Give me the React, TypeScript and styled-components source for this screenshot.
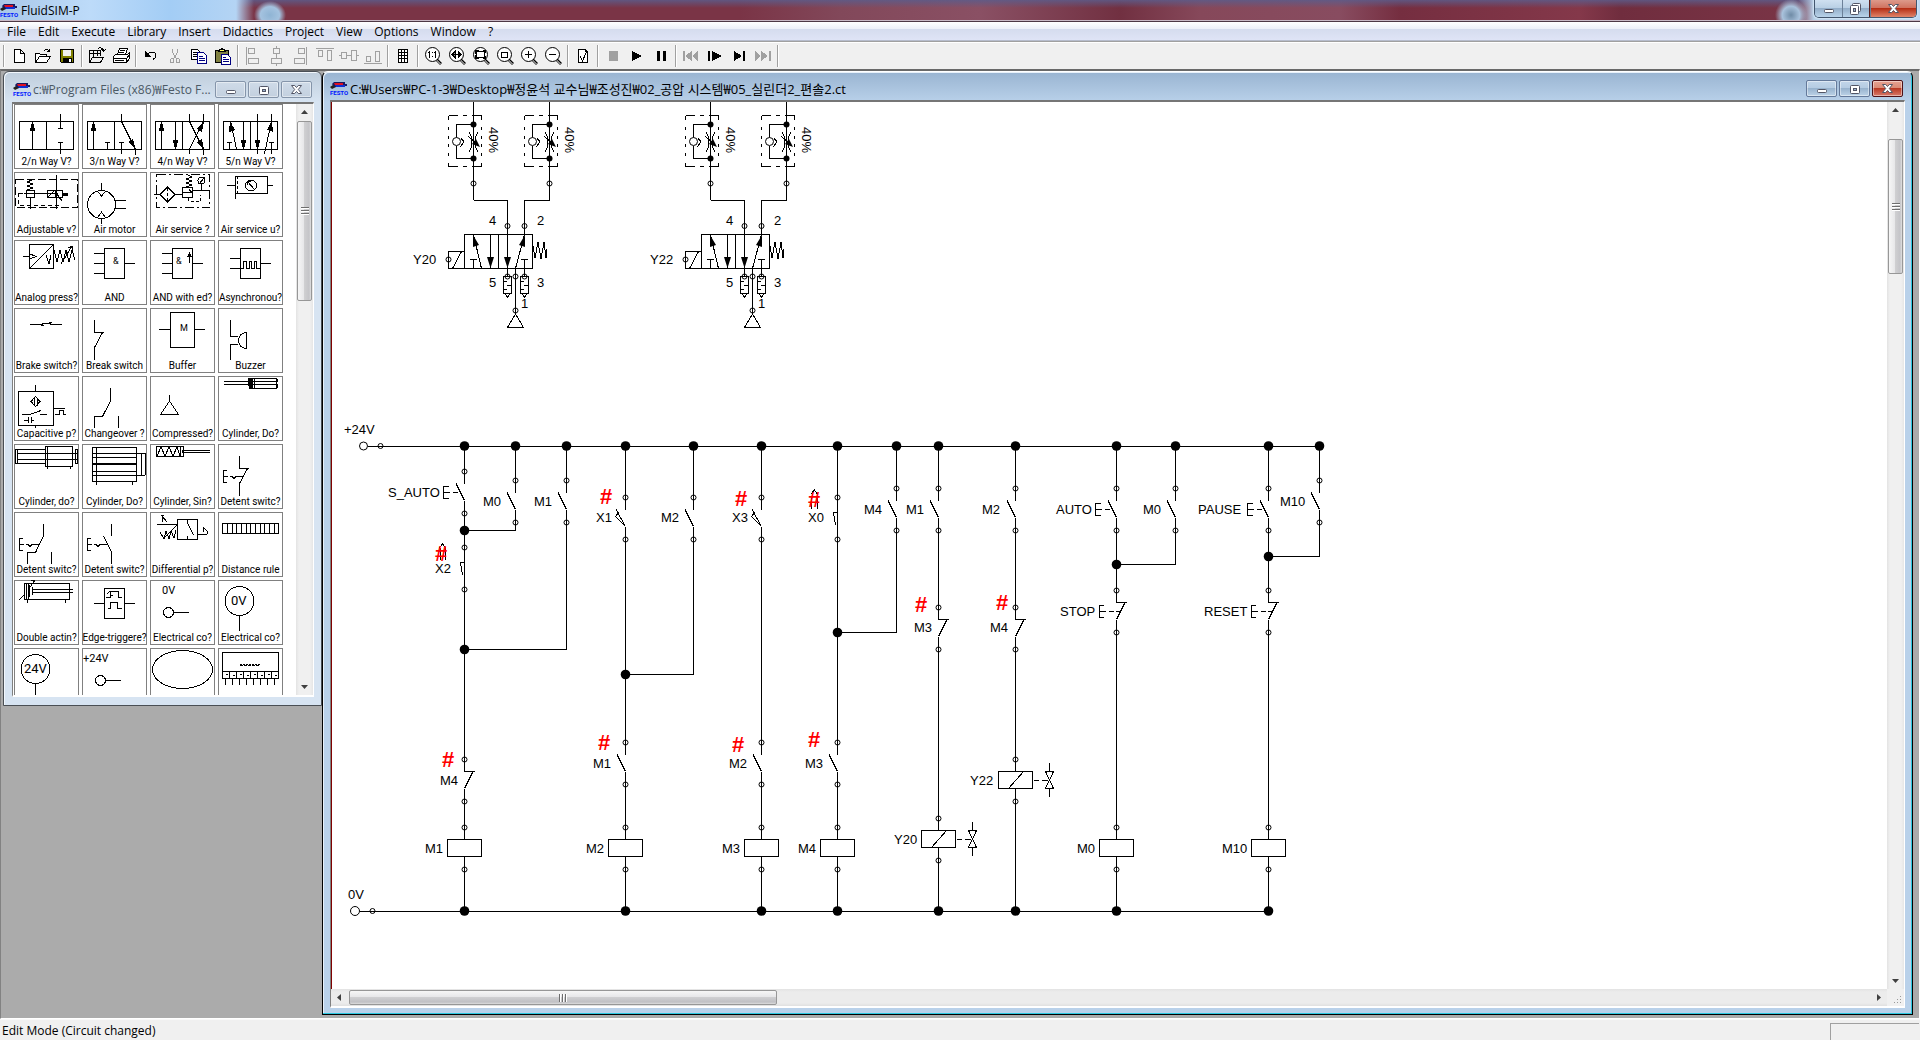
import React from "react";
import styled, { createGlobalStyle, css } from "styled-components";

const uiFont = '"Open Sans", "Noto Sans CJK KR", sans-serif';
const drawFont = '"Liberation Sans", Arial, sans-serif';

const GlobalStyle = createGlobalStyle`
  * { box-sizing: border-box; }
  html, body, #root { height: 100%; }
  body { margin: 0; overflow: hidden; font: 12px/16px ${uiFont}; color: #000; }
  button { font: inherit; color: inherit; padding: 0; margin: 0; border: 0; background: none; }
  svg { display: block; }
`;

/* ---------- application frame ---------- */

const Shell = styled.div`
  display: flex;
  flex-direction: column;
  height: 100vh;
  min-height: 0;
  background: #f0f0f0;
`;

const TitleBar = styled.header`
  display: flex;
  justify-content: space-between;
  align-items: flex-start;
  height: 22px;
  flex: none;
  padding-right: 3px;
  border-bottom: 1px solid #4d3845;
  box-shadow: inset 0 -1px 0 #c9b9c6;
  background:
    radial-gradient(ellipse 16px 14px at 270px 15px, #8fb4d4 0, #a4c2df 60%, transparent 100%),
    radial-gradient(ellipse 16px 16px at calc(100% - 129px) 15px, #6f8ba6 0, #a9c2dc 55%, transparent 100%),
    linear-gradient(90deg, transparent 0, transparent calc(100% - 122px), #b5cfe8 calc(100% - 106px), #bcd8f3 100%),
    linear-gradient(90deg, #a9c8e8 0, #bddbf9 90px, #a3cdf5 170px, #b4d4f4 236px, transparent 254px),
    linear-gradient(180deg, rgba(92, 92, 138, 0.85) 0, rgba(92, 92, 138, 0) 8px),
    linear-gradient(90deg, #7a3446 260px, #7a3446 740px, #82485a 840px, #8a5064 980px, #713041 1120px, #86485a 1200px, #884c60 1340px, #752e40 1400px, #84384a 1580px, #702d3e 1620px, #803a4c 100%);
`;

const TitleLabel = styled.div`
  display: flex;
  align-items: center;
  gap: 4px;
  padding-top: 3px;
`;

const MenuBar = styled.nav`
  display: flex;
  align-items: center;
  height: 19px;
  flex: none;
  padding: 1px 0 0 1px;
  background: linear-gradient(180deg, #fff 0, #eceff8 7px, #d5dcee 7px, #dfe4f6 100%);
  border-bottom: 1px solid #b6bccc;
`;

const MenuItem = styled.button`
  padding: 0 6px;
  height: 17px;
  line-height: 17px;
`;

const ToolBar = styled.div`
  display: flex;
  align-items: center;
  height: 28px;
  flex: none;
  padding-left: 1px;
  border-top: 1px solid #a0a0a0;
  box-shadow: inset 0 1px 0 #fff;
`;

const ToolButton = styled.button`
  width: 24px;
  height: 24px;
  color: ${(p) => (p.disabled ? "#a0a0a0" : "#000")};
`;

const Divider = styled.span`
  width: 2px;
  height: 22px;
  margin: 0 2px;
  background: #a0a0a0;
  border-right: 1px solid #fff;
`;

const Desktop = styled.main`
  display: flex;
  align-items: flex-start;
  flex: 1;
  min-height: 0;
  padding: 0 6px 3px 2px;
  background: #ababab;
  border-top: 2px solid #696969;
  border-left: 1px solid #828282;
  border-right: 1px solid #fff;
  border-bottom: 1px solid #fff;
`;

const StatusBar = styled.footer`
  display: flex;
  justify-content: space-between;
  align-items: flex-start;
  height: 21px;
  flex: none;
  padding: 3px 1px 0 2px;
  border-top: 1px solid #fafafa;
`;

const StatusBox = styled.span`
  width: 89px;
  height: 17px;
  border-top: 1px solid #a0a0a0;
  border-left: 1px solid #a0a0a0;
`;

/* ---------- child windows ---------- */

const Frame = styled.section<{ $active?: boolean }>`
  display: flex;
  flex-direction: column;
  border-radius: 6px 6px 0 0;
  ${(p) =>
    p.$active
      ? css`
          flex: 1;
          min-width: 0;
          align-self: stretch;
          padding: 0 7px 6px 7px;
          border: 1px solid #000;
          border-top-color: #fff;
          background: linear-gradient(180deg, #99b4d1 0, #b9d1ea 30px);
          box-shadow: inset -1px -1px 0 #2bc8e0, inset 1px 1px 0 #e8f1fa;
        `
      : css`
          flex: none;
          width: 319px;
          height: 635px;
          padding: 0 7px 8px 8px;
          border: 1px solid #4a4f55;
          background: linear-gradient(180deg, #bfcddb 0, #d7e4f2 30px);
          box-shadow: inset 1px 1px 0 #f2f7fc;
        `}
`;

const Caption = styled.div<{ $active?: boolean }>`
  display: flex;
  align-items: center;
  justify-content: space-between;
  height: ${(p) => (p.$active ? 28 : 30)}px;
  flex: none;
  padding: 5px 2px 0 ${(p) => (p.$active ? 0 : 1)}px;
  font-size: ${(p) => (p.$active ? 13 : 12)}px;
  color: ${(p) => (p.$active ? "#000" : "#4c5a66")};
`;

const CaptionText = styled.span`
  display: flex;
  align-items: center;
  gap: 3px;
  white-space: nowrap;
`;

const ButtonRow = styled.span`
  display: flex;
  gap: 2px;
`;

const CaptionButton = styled.button<{ $tone: "idle" | "live" | "close" }>`
  display: grid;
  place-items: center;
  width: 31px;
  height: 17px;
  border-radius: 2px;
  border: 1px solid ${(p) => ({ idle: "#8595aa", live: "#64799a", close: "#4d1117" })[p.$tone]};
  box-shadow: inset 0 0 0 1px rgba(255, 255, 255, 0.45);
  background: ${(p) =>
    ({
      idle: "linear-gradient(180deg, #cfdbe8, #c3d0df)",
      live: "linear-gradient(180deg, #c2d5e9 0, #b4cbe2 50%, #98b3ce 50%, #bdd3e8 100%)",
      close: "linear-gradient(180deg, #e6a393 0, #d98873 50%, #b93a24 50%, #d8796a 100%)",
    })[p.$tone]};
`;

const MainButtons = styled.div`
  display: flex;
  height: 18px;
  border: 1px solid #43566e;
  border-top: 0;
  border-radius: 0 0 5px 5px;
  overflow: hidden;
  box-shadow: 0 0 2px 1px #d7e8f7;
`;

const MainButton = styled.button<{ $close?: boolean }>`
  display: grid;
  place-items: center;
  width: ${(p) => (p.$close ? 47 : 27)}px;
  border-left: ${(p) => (p.$close ? "1px solid #5c1f1c" : "0")};
  background: ${(p) =>
    p.$close
      ? "linear-gradient(180deg, #dd9a8b 0, #cf6f5c 50%, #b62f16 50%, #e0846a 100%)"
      : "linear-gradient(180deg, #cfe0f0 0, #b7cee4 50%, #93aec9 50%, #b9d3ea 100%)"};
  & + & { box-shadow: inset 1px 0 0 #6c8199; }
`;

const Viewport = styled.div`
  display: grid;
  flex: 1;
  min-height: 0;
  grid-template-columns: minmax(0, 1fr) auto;
  grid-template-rows: minmax(0, 1fr) auto;
  border-top: 2px solid #767676;
  border-left: 1px solid #808080;
  border-right: 1px solid #fff;
  border-bottom: 2px solid #fff;
  background: #fff;
`;

/* ---------- scroll bars ---------- */

const VTrack = styled.div`
  display: flex;
  flex-direction: column;
  align-items: center;
  width: 17px;
  min-height: 0;
  background: linear-gradient(90deg, #e3e3e3, #f0f0f0 3px, #f0f0f0 14px, #e6e6e6);
`;

const HTrack = styled.div`
  display: flex;
  align-items: center;
  height: 17px;
  background: linear-gradient(180deg, #e3e3e3, #ececec 3px, #ececec 14px, #e0e0e0);
`;

const ArrowButton = styled.button<{ $flow: "v" | "h" }>`
  display: grid;
  place-items: center;
  flex: none;
  width: 17px;
  height: 17px;
`;

const VThumb = styled.div<{ $size: number; $offset: number }>`
  display: grid;
  place-items: center;
  flex: none;
  width: 15px;
  height: ${(p) => p.$size}px;
  margin-top: ${(p) => p.$offset}px;
  border: 1px solid #979797;
  border-radius: 2px;
  background: linear-gradient(90deg, #f6f6f6 0, #e7e7e9 45%, #cfcfd1 50%, #c4c4c8 85%, #e0e0e0 100%);
`;

const HThumb = styled.div`
  display: grid;
  place-items: center;
  flex: none;
  width: 27.5%;
  height: 15px;
  margin-left: 1px;
  border: 1px solid #979797;
  border-radius: 2px;
  background: linear-gradient(180deg, #f6f6f6 0, #e7e7e9 45%, #cfcfd1 50%, #c0c0c4 85%, #dcdcdc 100%);
`;

const Spring = styled.span`
  flex: 1;
`;

const Corner = styled.div`
  display: grid;
  place-items: end;
  padding: 0 2px 2px 0;
  background: #f0f0f0;
`;

/* ---------- component library ---------- */

const Shelf = styled.div`
  display: grid;
  grid-template-columns: repeat(4, 65px);
  grid-auto-rows: 65px;
  gap: 3px;
  padding: 0 1px;
  overflow: hidden;
  min-height: 0;
`;

const Part = styled.button`
  display: flex;
  flex-direction: column;
  align-items: center;
  border: 1px solid #808080;
  background: #fff;
  font: 10px/12px Roboto, sans-serif;
  white-space: nowrap;
`;

const Sheet = styled.div`
  overflow: hidden;
  min-width: 0;
  min-height: 0;
  border-left: 1px solid #800000;
`;

/* ---------- small drawings ---------- */

const Festo = () => (
  <svg width="17" height="16" viewBox="0 0 17 16" overflow="visible" aria-hidden="true">
    <path d="M2 3 4 1h11v2h2v2h-3v1H4z" fill="#1a1a60" />
    <path d="M4 2h9v2H5z" fill="#e01020" />
    <path d="M5 4h10v2H6z" fill="#1030d0" />
    <path d="M0 6l3-2 3 2-4 2z" fill="#222" />
    <text x="0" y="14" fontSize="6" fontWeight="700" fontFamily="Roboto, sans-serif" fill="#0018ff">
      FESTO
    </text>
  </svg>
);

const Min = () => (
  <svg width="12" height="10" viewBox="0 0 12 10" aria-hidden="true">
    <rect x="1.5" y="5.5" width="9" height="3" rx="1" fill="#fff" stroke="#535666" />
  </svg>
);

const Max = () => (
  <svg width="12" height="10" viewBox="0 0 12 10" aria-hidden="true">
    <rect x="1.5" y="1.5" width="9" height="8" rx="1" fill="#fff" stroke="#535666" />
    <rect x="4.5" y="4.5" width="3" height="2" fill="#9db3d0" stroke="#535666" />
  </svg>
);

const Restore = () => (
  <svg width="13" height="12" viewBox="0 0 13 12" aria-hidden="true">
    <rect x="3.5" y="0.5" width="8" height="8" rx="1" fill="#fff" stroke="#535666" />
    <rect x="1.5" y="2.5" width="8" height="9" rx="1" fill="#fff" stroke="#535666" />
    <rect x="4.5" y="5.5" width="2" height="3" fill="#9db3d0" stroke="#535666" />
  </svg>
);

const Cross = () => (
  <svg width="13" height="11" viewBox="0 0 13 11" aria-hidden="true">
    <path
      d="M1.5 1.5h3.2l1.8 2 1.8-2h3.2L8.3 5.5l3.2 4H8.3l-1.8-2-1.8 2H1.5l3.2-4z"
      fill="#fff"
      stroke="#535666"
    />
  </svg>
);

const arrowPaths = {
  up: "M0 5 3.5 1 7 5z",
  down: "M0 2 3.5 6 7 2z",
  left: "M5 0 1 3.5 5 7z",
  right: "M2 0 6 3.5 2 7z",
};

const Arrow = ({ dir }: { dir: keyof typeof arrowPaths }) => (
  <svg width="7" height="7" viewBox="0 0 7 7" aria-hidden="true">
    <path d={arrowPaths[dir]} fill="#404040" />
  </svg>
);

const Grip = ({ turned }: { turned?: boolean }) => (
  <svg width="8" height="8" viewBox="0 0 8 8" aria-hidden="true" shapeRendering="crispEdges">
    <path d={turned ? "M.5 0v8M3.5 0v8M6.5 0v8" : "M0 .5h8M0 3.5h8M0 6.5h8"} stroke="#6e6e6e" />
    <path d={turned ? "M1.5 0v8M4.5 0v8M7.5 0v8" : "M0 1.5h8M0 4.5h8M0 7.5h8"} stroke="#fff" />
  </svg>
);

/* ---------- tool bar glyphs, each on a 24 by 24 field ---------- */

const Lens = ({ children }: { children?: React.ReactNode }) => (
  <>
    <path d="M15.5 15.5l5 5" stroke="#808080" strokeWidth="3" />
    <circle cx="11.5" cy="10.5" r="7" fill="#fff" stroke="#000" shapeRendering="auto" />
    <path d="M16 15l4 4" stroke="#000" strokeWidth="1" />
    {children}
  </>
);

type Tool = { name: string; off?: boolean; art: React.ReactNode } | null;
const line = (d: string, fill = "none") => <path d={d} fill={fill} stroke="currentColor" />;
const solid = (d: string) => <path d={d} fill="currentColor" />;
const folder = "M4.5 18.5v-9h4l1 1h6v2M4.5 18.5l4-6h11l-4 6z";

const tools: Tool[] = [
  { name: "New", art: line("M7.5 5.5h6l4 4v9h-10zM13.5 5.5v4h4", "#fff") },
  {
    name: "Open",
    art: (
      <>
        {line(folder, "#fff")}
        {line("M12.5 7.5c1-2 4-3 6 0M18.5 4.5v3h-3")}
      </>
    ),
  },
  {
    name: "Save",
    art: (
      <>
        <path d="M5.5 5.5h13v13h-12l-1-1z" fill="#808000" stroke="#000" />
        <path d="M8 6h8v6H8z" fill="#f0f0f0" />
        <path d="M8 14h9v5H8z" fill="#000" />
        <path d="M14 15h2v3h-2z" fill="#fff" />
      </>
    ),
  },
  null,
  {
    name: "Open circuit preview",
    art: line(
      "M4.5 17v-11h11v6M4.5 9.5h11M8.5 6v8M12.5 6v6M4.5 18.5l3-5h11l-3 5zM13.5 4.5c2-1.500 5 0 5 3M20.500 5.500l-2 2-2-2"
    ),
  },
  {
    name: "Print",
    art: (
      <>
        {line("M8.5 10.5l2-6h8l-2 6", "#fff")}
        {line("M11 6.500h5M10 8.500h5")}
        {line("M4.5 12.5l2-2h12l2-2v6l-3 4h-13z", "#fff")}
        {line("M4.500 14.500h13l3-4M17.500 14.500v4M6 16.500h9")}
      </>
    ),
  },
  null,
  { name: "Undo", art: <>{line("M8 10.500c3-3 9-3 9 1 0 2-1 3-3 4")}{solid("M6 7v6h6z")}</> },
  {
    name: "Cut",
    off: true,
    art: line("M9.500 4.500v4l4 6M14.500 4.500v4l-4 6M8.500 14.500h2v4h-3v-3zM13.500 14.500h2l1 1v3h-3z"),
  },
  {
    name: "Copy",
    art: (
      <>
        {line("M4.500 5.500h6l2 2v8h-8zM6 8.500h4M6 10.500h5M6 12.500h5", "#fff")}
        <path d="M10.500 8.500h6l3 3v8h-9z" fill="#fff" stroke="#000080" />
        <path d="M12 12.500h4M12 14.500h6M12 16.500h6" stroke="#000080" />
      </>
    ),
  },
  {
    name: "Paste",
    art: (
      <>
        <path d="M4.500 6.500h13v12h-13z" fill="#808040" stroke="#000" />
        <path d="M8 7.500l1-2h1l1-1 1 1h1l1 2z" fill="#ffff60" stroke="#000" />
        <path d="M10.500 10.500h6l3 3v7h-9z" fill="#fff" stroke="#000080" />
        <path d="M12 13.500h3M12 15.500h6M12 17.500h6" stroke="#000080" />
      </>
    ),
  },
  null,
  { name: "Align left", off: true, art: line("M5.500 3v18M7.500 4.500h6v5h-6zM7.500 14.500h10v5h-10z") },
  { name: "Align centre", off: true, art: line("M8.500 4.500h6v5h-6zM6.500 14.500h10v5h-10zM11.500 2v2M11.500 10v4M11.500 20v2") },
  { name: "Align right", off: true, art: line("M17.500 3v18M9.500 4.500h6v5h-6zM5.500 14.500h10v5h-10z") },
  { name: "Align top", off: true, art: line("M3 4.500h18M5.500 6.500h4v6h-4zM14.500 6.500h4v10h-4z") },
  { name: "Align middle", off: true, art: line("M4.500 8.500h5v6h-5zM14.500 6.500h5v10h-5zM2 11.500h2M10 11.500h4M20 11.500h2") },
  { name: "Align bottom", off: true, art: line("M3 19.500h18M5.500 12.500h4v5h-4zM14.500 7.500h4v10h-4z") },
  null,
  { name: "Show grid", art: line("M7.500 5.500h9v13h-9zM10.500 5v14M13.500 5v14M7 8.500h10M7 11.500h10M7 14.500h10", "#fff") },
  null,
  { name: "Zoom 1:1", art: <Lens>{line("M8.500 7v7M14.500 7v7M7 8.500h1M13 8.500h1M11.500 8v1M11.500 12v1")}</Lens> },
  { name: "Zoom previous", art: <Lens>{line("M7 10.500h9M7 10.500l3-3v6zM16 10.500l-3-3v6z", "#9a9a9a")}</Lens> },
  { name: "Zoom to window", art: <Lens>{line("M7.500 7.500h8v6h-8z")}{solid("M6 6h4l-4 4zM17 6h-4l4 4zM6 15h4l-4-4zM17 15h-4l4-4z")}</Lens> },
  { name: "Zoom to area", art: <Lens>{line("M8.500 8.500h6v5h-6z")}</Lens> },
  { name: "Zoom in", art: <Lens>{line("M8 10.500h7M11.500 7v7")}</Lens> },
  { name: "Zoom out", art: <Lens>{line("M8 10.500h7")}</Lens> },
  null,
  { name: "Check drawing", art: <>{line("M7.500 5.500h7l2 2v11h-9z", "#fff")}{line("M9 12l2.500 5 4-9M14.500 5.500v2h2")}</> },
  null,
  { name: "Stop", off: true, art: solid("M8 7h9v10H8z") },
  { name: "Start", art: solid("M7 7l10 5-10 5z") },
  { name: "Pause", art: solid("M8 7h3v10H8zM14 7h3v10h-3z") },
  null,
  { name: "Reset", off: true, art: solid("M4 7h2v10H4zM13 7v10l-7-5zM19 7v10l-6-5z") },
  { name: "Single step", art: solid("M5 7h2v10H5zM9 7l10 5-10 5z") },
  { name: "Next step", art: solid("M7 7l8 5-8 5zM16 7h2v10h-2z") },
  { name: "Next topic", off: true, art: solid("M4 7v10l6-5zM10 7v10l7-5zM18 7h2v10h-2z") },
  null,
];

/* ---------- library symbols ---------- */

const L = ({ d, fill = "none", dash }: { d: string; fill?: string; dash?: string }) => (
  <path d={d} fill={fill} stroke="#000" strokeDasharray={dash} />
);
const K = ({ d }: { d: string }) => <path d={d} fill="#000" />;
const T = ({ x, y, s = 10, children }: { x: number; y: number; s?: number; children: string }) => (
  <text x={x} y={y} fontSize={s} fontFamily="Roboto, sans-serif">
    {children}
  </text>
);
const up = (x: number) => `M${x} 17l-3 10h6z`;
const down = (x: number) => `M${x} 46l-3-10h6z`;
const pushE = "M9 26.500H5.500v12H9M5 32.500h5M12 32.500h2l2 2 2-2h2";
const gate = "M22.500 8.500h20v30h-20zM42.500 23.500h10";

const parts: [string, React.ReactNode][] = [
  ["2/n Way V?", <><L d="M5.500 17.500h54v28h-54zM32.500 17v28M18.500 20v25M46.500 10v14.500M44 24.500h5M46.500 50V38.500M44 38.500h5" /><K d={up(18.5)} /></>],
  ["3/n Way V?", <><L d="M5.500 17.500h54v28h-54zM32.500 17v28M11.500 20v25M25.500 45v-6.500M23 38.500h5M39.500 50V38.500M37 38.500h5M39.500 10v7.500l14 28v5" /><K d={up(11.5)} /><K d="M54 46l-8-8 5-3z" /></>],
  ["4/n Way V?", <><L d="M5.500 17.500h54v28h-54zM32.500 17v28M11.500 20v25M25.500 17v25M39.500 10v7.500l14 28v5M39.500 50v-5l14-28v-7" /><K d={up(11.5)} /><K d={down(25.5)} /><K d="M54 46l-7-8 5-3zM54 17l-7 8 5 3z" /></>],
  ["5/n Way V?", <><L d="M5.500 17.500h54v28h-54zM32.500 17v28M18.500 45l-6-28M25.500 17v25M11.500 45v-6.500M9 38.500h5M39.500 10v40M46.500 50l1-5 6-28v-7M53.500 50V38.500M51 38.500h5" /><K d="M12 17l5 9-6 2zM54 17l1 11-6-2z" /><K d={down(25.5)} /><K d={down(39.5)} /></>],
  ["Adjustable v?", <><L d="M1.500 7.500h62v28h-62z" dash="8 3" /><L d="M12.500 18.500h8v7h-8zM10 21.500h34M33.500 18.500h15v7h-15zM41.500 18v8M34 25l6-6M42.500 3v34M16.500 26v11M13 18l6-2-6-2 6-2-6-2 5-2M49 24l1-3 1 3 1-3 1 3 1-3M42 21l6 8" /><L d="M4.500 21v12.500h40M4.500 21.500h8" dash="4 3" /></>],
  ["Air motor", <><circle cx="19.500" cy="32.500" r="14" fill="none" stroke="#000" /><L d="M19.500 11v8M19.500 46v6M33 28.500h11M33 36.500h11M16 20l3.500 4 3.500-4M16 45l3.500-5 3.500 5" /></>],
  ["Air service ?", <><L d="M6.500 2.500h53v33h-53z" dash="9 3 2 3" /><L d="M10 22.500l7.500-7.500 7.500 7.500-7.500 7.500zM4 22.500h6M25 22.500h7M32.500 15.500h10v10h-10zM32 20.500h10l-3-3M42 18.500h18M36 15l6-2-6-2 6-2-6-2 6-2-4-2M49 12l6-7M51.500 12v6" /><L d="M17.500 16v14M38.500 26v3h12v-6" dash="3 2" /><circle cx="51.500" cy="8.500" r="3.500" fill="none" stroke="#000" /></>],
  ["Air service u?", <><L d="M17.500 4.500h32v17h-32zM9 13.500h8M50 13.500h5M17.500 21v6M29 9l8 9M29 13V9h4" /><L d="M19.500 4v18" dash="3 2" /><circle cx="33" cy="13.500" r="5.500" fill="none" stroke="#000" /></>],
  ["Analog press?", <L d="M15.500 4.500h24v24h-24zM15.500 28.500l24-24M9 16.500h7M16 14l6 2.500-6 2.500M32 15l3 9 2-9M40 10l3 12 3-12 3 12 3-12 3 12 3-12 3 10M47 24L58 6M58 6l-4 2M58 6v5" />],
  ["AND", <><L d={gate + "M12 13.500h10M12 23.500h10M12 33.500h10"} /><T x={31} y={24} s={9}>&amp;</T></>],
  ["AND with ed?", <><L d={gate + "M12 13.500h10M12 23.500h10M12 33.500h10M39.500 13v10"} /><K d="M39.500 12l-2.500 5h5z" /><T x={26} y={24} s={9}>&amp;</T></>],
  ["Asynchronou?", <L d={gate + "M12 18.500h10M12 28.500h13v-7h3v7h3v-7h2v7h3v-7h2v7h4"} />],
  ["Brake switch?", <L d="M16 16.500h11l3-1h5l3 1h10M27 17.500h3M35 14.500h3" />],
  ["Break switch", <L d="M12.500 12v12.500h9M20.500 24.500l-8 15V52" />],
  ["Buffer", <><L d="M20.500 4.500h24v35h-24zM9 21.500h11M45 21.500h10" /><T x={30} y={23} s={9}>M</T></>],
  ["Buzzer", <L d="M12.500 12v16.500H20M12.500 52V36.500H20M28.500 24.500v16c-4 0-8-3-8-8s4-8 8-8z" />],
  ["Capacitive p?", <L d="M4.500 15.500h35v34h-35zM21.500 9v6M21.500 50v2M17 25.500l4.500-5 4.500 5-4.500 5zM20.500 22v8M23.500 22v8M8 38.500h8l11-4M26 38.500h7M10 44.500h4M14.500 41v6M17.500 41v6M18 44.500h2M40 32.500h11M41 38.500h4v-4h4v4h3" />],
  ["Changeover ?", <L d="M28.500 12v13l-8 15.500h-8V52M36.500 40v12" />],
  ["Compressed?", <L d="M19.500 19v6l-9 13.500h18l-9-13.500" />],
  ["Cylinder, Do?", <><L d="M6 5.500h54M6 8.500h54M31.500 2.500h27v10h-27zM36.500 2v10M59.500 3v3M59.500 9v3" /><K d="M30 2h5v11h-3v-3h-2z" /></>],
  ["Cylinder, do?", <L d="M1.500 5.500h30M1.500 19.500h30M1.500 5v15M3.500 5v15M3 9.500h60M3 15.500h60M31.500 2.500h27v20h-27zM33.500 2v20M61.500 5.500h2v14h-2zM33.500 22v3M56.500 22v3" />],
  ["Cylinder, Do?", <><L d="M10.500 3.500h44v34h-44zM14.500 3v34M11 9.500h52M11 13.500h44M11 27.500h44M11 31.500h52M59.500 9v22M63.500 9v22M14.500 38v3M50.500 38v3" /><K d="M11 19h43v2H11z" /></>],
  ["Cylinder, Sin?", <L d="M6.500 2.500h27v10h-27zM30.500 2v10M7 12l4-9 4 9 4-9 4 9 4-9 3 9M34 6.500h26M34 8.500h26M32.500 6v3" />],
  ["Detent switc?", <L d={pushE + "M21.500 12v12.500h9M29.500 24.500l-8 15V52M20 32.500h5"} />],
  ["Detent switc?", <L d={pushE + "M29.500 12v12l-8 16.500h-8V52M37.500 40v12M20 32.500h5"} />],
  ["Detent switc?", <L d={pushE + "M29.500 12v12M21.500 24l8 16v12M20 32.500h5"} />],
  ["Differential p?", <L d="M27.500 7.500h20v20h-20zM7 12.500h20M12 10V4l5 6M11 3h3M10 20l4 7 2-8 3 8 2-8 3 7 2-8M15 25L27 13M37.500 7v4l6 12M37.500 28v-4M47 22.500h10M53 20v-5l4 4v3" />],
  ["Distance rule", <L d="M4.500 11.500h56v10h-56zM9.500 11v10M14.500 11v10M18.500 11v10M23.500 11v10M28.500 11v10M32.500 11v10M37.500 11v10M42.500 11v10M46.500 11v10M51.500 11v10M56.500 11v10" />],
  ["Double actin?", <><L d="M10.500 3.500h45v16h-45zM12.500 3v16M18 9.500h41M18 12.500h41M14.500 3v16M18.500 7v8M5 20l5-5M14 10L21 0M21 0l-4 1M13.500 20v3M51.500 20v3" /><K d="M14 5h2v12h-2z" /></>],
  ["Edge-triggere?", <L d={gate + "M12 23.500h10M24 17.500h4v-6h8v6h4M25.500 28.500h3v-6h7v6h4M28 11l-3 3M28 15h3"} />],
  ["Electrical co?", <><T x={12} y={14} s={11}>0V</T><circle cx="18.500" cy="32.500" r="5" fill="none" stroke="#000" /><L d="M24 32.500h15" /></>],
  ["Electrical co?", <><T x={13} y={25} s={13}>0V</T><circle cx="21.500" cy="21" r="14.500" fill="none" stroke="#000" /><L d="M21.500 36v15" /></>],
];

/* The last shelf row is scrolled half out of view, so its captions stay off the sheet. */
const lastRow: [string, React.ReactNode][] = [
  ["Electrical connection 24V, round", <><T x={10} y={25} s={13}>24V</T><circle cx="21.500" cy="21" r="14.500" fill="none" stroke="#000" /><L d="M21.500 36v15" /></>],
  ["Electrical connection 24V", <><T x={1} y={14} s={11}>+24V</T><circle cx="18.500" cy="32.500" r="5" fill="none" stroke="#000" /><L d="M24 32.500h15" /></>],
  ["Ellipse", <ellipse cx="32.500" cy="21.500" rx="30" ry="19" fill="none" stroke="#000" />],
  ["Input port", <><L d="M4.500 4.500h56v26h-56zM4 23.500h56M11.500 24v6M18.500 24v6M25.500 24v6M32.500 24v6M39.500 24v6M46.500 24v6M53.500 24v6M7.500 31v6M14.500 31v6M21.500 31v6M28.500 31v6M35.500 31v6M42.500 31v6M49.500 31v6M56.500 31v6M8 26.500h2M15 27.500h2M22 26.500h2M29 27.500h2M36 26.500h2M43 27.500h2M50 26.500h2M57 27.500h2" /><L d="M22 16.500h20" dash="2 1" /><L d="M22 17.500h20" dash="3 1" /></>],
];

const PartArt = ({ children }: { children: React.ReactNode }) => (
  <svg width="63" height="51" viewBox="1 1 63 51" overflow="visible" shapeRendering="crispEdges" aria-hidden="true">
    {children}
  </svg>
);

/* ---------- circuit drawing ---------- */

const Sym = styled.g`
  fill: none;
  stroke: #000;
  shape-rendering: crispEdges;
`;
const Label = styled.text`
  font: 13px ${drawFont};
  fill: #000;
`;
const Mark = styled.text`
  font: bold 22px ${drawFont};
  fill: #f00;
`;

const Node = ({ x, y }: { x: number; y: number }) => <circle cx={x} cy={y} r="2.500" shapeRendering="auto" />;
const Dot = ({ x, y }: { x: number; y: number }) => <circle cx={x} cy={y} r="4.800" fill="#000" stroke="none" />;

type Kind = "make" | "break" | "sensor" | "held" | "coil" | "solenoid";
type Item = { x: number; y: number; kind: Kind; push?: boolean };

const rails: [number, number][][] = [];
const wire = (...points: [number, number][]) => rails.push(points);

const top = 446;
const bottom = 911;
const cols = [464.5, 515.5, 566.5, 625.5, 693.5, 761.5, 837.5, 896.5, 938.5, 1015.5, 1116.5, 1175.5, 1268.5, 1319.5];
const [a, b, c, d, e, f, g, h, i, j, k, l, m, n] = cols;

wire([367.5, top], [n, top]);
wire([359.5, bottom], [m, bottom]);

const items: Item[] = [
  { x: a, y: 471.5, kind: "make", push: true },
  { x: b, y: 480.5, kind: "make" },
  { x: c, y: 480.5, kind: "make" },
  { x: a, y: 547.5, kind: "held" },
  { x: a, y: 759.5, kind: "break" },
  { x: a, y: 827.5, kind: "coil" },
  { x: d, y: 497.5, kind: "sensor" },
  { x: e, y: 497.5, kind: "make" },
  { x: d, y: 742.5, kind: "make" },
  { x: d, y: 827.5, kind: "coil" },
  { x: f, y: 497.5, kind: "sensor" },
  { x: f, y: 742.5, kind: "make" },
  { x: f, y: 827.5, kind: "coil" },
  { x: g, y: 497.5, kind: "held" },
  { x: h, y: 488.5, kind: "make" },
  { x: g, y: 742.5, kind: "make" },
  { x: g, y: 827.5, kind: "coil" },
  { x: i, y: 488.5, kind: "make" },
  { x: i, y: 607.5, kind: "break" },
  { x: i, y: 818.5, kind: "solenoid" },
  { x: j, y: 488.5, kind: "make" },
  { x: j, y: 607.5, kind: "break" },
  { x: j, y: 759.5, kind: "solenoid" },
  { x: k, y: 488.5, kind: "make", push: true },
  { x: l, y: 488.5, kind: "make" },
  { x: k, y: 590.5, kind: "break", push: true },
  { x: k, y: 827.5, kind: "coil" },
  { x: m, y: 488.5, kind: "make", push: true },
  { x: n, y: 480.5, kind: "make" },
  { x: m, y: 590.5, kind: "break", push: true },
  { x: m, y: 827.5, kind: "coil" },
];

/* Each column is wired from the end of one device to the start of the next. */
const ends: Record<number, number> = { [b]: 530.5, [c]: 649.5, [e]: 674.5, [h]: 632.5, [l]: 564.5, [n]: 556.5 };
cols.forEach((x) => {
  let y = top;
  items
    .filter((it) => it.x === x)
    .sort((p, q) => p.y - q.y)
    .forEach((it) => {
      wire([x, y], [x, it.y + 12]);
      y = it.y + 29;
    });
  wire([x, y], [x, ends[x] ?? bottom]);
});
wire([a, 530.5], [b, 530.5]);
wire([a, 649.5], [c, 649.5]);
wire([d, 674.5], [e, 674.5]);
wire([g, 632.5], [h, 632.5]);
wire([k, 564.5], [l, 564.5]);
wire([m, 556.5], [n, 556.5]);

const dots: [number, number][] = [
  ...cols.map((x): [number, number] => [x, top]),
  ...[a, d, f, g, i, j, k, m].map((x): [number, number] => [x, bottom]),
  [a, 530.5], [a, 649.5], [d, 674.5], [g, 632.5], [k, 564.5], [m, 556.5],
];

const shapes: Record<Kind, string> = {
  make: "M-8.500 12L0 29",
  break: "M0 12h10M8.500 12L0 29",
  sensor: "M-9.500 12L0 29M0 29l-10-10 3-4",
  held: "M0 12v17M0 15h-4l2 13",
  coil: "M-17 12h34v17h-34z",
  solenoid:
    "M-17 12h34v17h-34zM-7 29L8 12M18 20.500h5M26 20.500h6M34 3v9M34 29v8M30 12h8l-8 17h8z",
};

const Device = ({ x, y, kind, push }: Item) => (
  <g transform={`translate(${x} ${y})`}>
    <path d={shapes[kind]} />
    <Node x={0} y={0} />
    <Node x={0} y={42} />
    {push && kind === "make" && <path d="M-16 15h-5v12h5M-21 21h6M-12 21h5" />}
    {push && kind === "break" && <path d="M-13 15h-4v12h4M-17 21h6M-8 21h5M-1 21h5" />}
  </g>
);

const labels: [number, number, string][] = [
  [344, 434, "+24V"], [348, 899, "0V"],
  [388, 497, "S_AUTO"], [483, 506, "M0"], [534, 506, "M1"], [596, 522, "X1"], [661, 522, "M2"],
  [732, 522, "X3"], [808, 522, "X0"], [864, 514, "M4"], [906, 514, "M1"], [982, 514, "M2"],
  [1056, 514, "AUTO"], [1143, 514, "M0"], [1198, 514, "PAUSE"], [1280, 506, "M10"],
  [435, 573, "X2"], [914, 632, "M3"], [990, 632, "M4"], [1060, 616, "STOP"], [1204, 616, "RESET"],
  [440, 785, "M4"], [425, 853, "M1"], [593, 768, "M1"], [586, 853, "M2"], [729, 768, "M2"],
  [722, 853, "M3"], [805, 768, "M3"], [798, 853, "M4"], [894, 844, "Y20"], [970, 785, "Y22"],
  [1077, 853, "M0"], [1222, 853, "M10"],
];

const marks: [number, number][] = [
  [435, 561], [600, 504], [735, 506], [808, 507], [915, 612], [996, 610],
  [442, 767], [598, 750], [732, 752], [808, 747],
];

const Throttle = ({ dx }: { dx: number }) => (
  <g transform={`translate(${dx} 0)`}>
    <Sym>
      <path d="M448.500 115.500h33M448.500 166.500h33" strokeDasharray="9 5 4 5 10" />
      <path d="M448.500 115.500v51M481.500 115.500v51" strokeDasharray="4 7 3 6 3 5 3 6 3 7 4" />
      <path d="M473.500 102v98M473.500 124.500h-17v13M456.500 146v12.500h17M460 147l4-5-3-4M469 132c4 6 4 14 0 20M478 132c-4 6-4 14 0 20M468 136l10 9" />
      <circle cx="456.500" cy="141.500" r="4" fill="#fff" shapeRendering="auto" />
      <Node x={473.5} y={183.5} />
    </Sym>
    <circle cx="473.500" cy="124.500" r="3" />
    <circle cx="473.500" cy="158.500" r="3" />
    <path d="M480 147l-8-3 4-5z" />
    <Label transform="translate(489 127) rotate(90)">40%</Label>
  </g>
);

const ValveGroup = ({ dx, name }: { dx: number; name: string }) => (
  <g transform={`translate(${dx} 0)`}>
    <Throttle dx={0} />
    <Throttle dx={76} />
    <Sym>
      <path d="M473.500 200.500h34v34M549.500 200.500h-25v34" />
      <path d="M464.500 234.500h68v34h-68zM498.500 234v34M481.500 268.500l-8-34M490.500 234v34M507.500 234v42M515.500 268.500l9-34M515.500 268v47" />
      <path d="M473.500 268v-9M470 259.500h7M524.500 276v-17M521 259.500h7" />
      <path d="M464.500 251.500h-16v17h16M452.500 268.500l9-17" />
      <path d="M533 246l2 12 3-16 3 17 3-17 2 16 1-9" />
      <path d="M503.500 276.500h8v17h-8zM503 281.500h4M507 285.500h5M503 289.500h4M505 294l2.500 3 2.500-3" />
      <path d="M520.500 276.500h8v17h-8zM520 281.500h4M524 285.500h5M520 289.500h4M522 294l2.500 3 2.500-3" />
      <path d="M515.500 314l-8 13.500h16z" />
      <Node x={507.5} y={226} />
      <Node x={524.5} y={226} />
      <Node x={448.5} y={259.5} />
      <Node x={507.5} y={276.5} />
      <Node x={515.5} y={276.5} />
      <Node x={524.5} y={276.5} />
      <Node x={515.5} y={310.5} />
    </Sym>
    <path d="M473 235l6 10-6 2zM525 235l0 12-6-2zM490.500 268l-3.500-11h7zM507.500 268l-3.500-11h7z" />
    <Label x="413" y="264">{name}</Label>
    <Label x="489" y="225">4</Label>
    <Label x="537" y="225">2</Label>
    <Label x="489" y="287">5</Label>
    <Label x="537" y="287">3</Label>
    <Label x="521" y="308">1</Label>
  </g>
);

const Circuit = () => (
  <svg width="1555" height="887" viewBox="332 102 1555 887" role="img" aria-label="Electro-pneumatic circuit">
    <ValveGroup dx={0} name="Y20" />
    <ValveGroup dx={237} name="Y22" />
    <Sym>
      {rails.map((p, index) => (
        <polyline key={index} points={p.map((q) => q.join(",")).join(" ")} />
      ))}
      {items.map((it) => (
        <Device key={`${it.x}-${it.y}`} {...it} />
      ))}
      <circle cx="363.500" cy="446" r="4" fill="#fff" shapeRendering="auto" />
      <circle cx="355" cy="911" r="4.500" fill="#fff" shapeRendering="auto" />
      <Node x={380.5} y={446} />
      <Node x={372.5} y={911} />
      <path d="M439 548l3.500-4 3.500 4M445.500 548v12M440.500 548v12M811.500 497v12M817.500 497v12M811 494l3.500-4 3 4" />
    </Sym>
    {dots.map(([x, y]) => (
      <Dot key={`${x}-${y}`} x={x} y={y} />
    ))}
    {labels.map(([x, y, text]) => (
      <Label key={`${x}-${y}`} x={x} y={y}>
        {text}
      </Label>
    ))}
    {marks.map(([x, y]) => (
      <Mark key={`${x}-${y}`} x={x} y={y}>
        #
      </Mark>
    ))}
  </svg>
);

/* ---------- assembly ---------- */

const menus = ["File", "Edit", "Execute", "Library", "Insert", "Didactics", "Project", "View", "Options", "Window", "?"];

const VScroll = ({ size, offset = 0 }: { size: number; offset?: number }) => (
  <VTrack>
    <ArrowButton $flow="v" aria-label="Scroll up"><Arrow dir="up" /></ArrowButton>
    <VThumb $size={size} $offset={offset}><Grip /></VThumb>
    <Spring />
    <ArrowButton $flow="v" aria-label="Scroll down"><Arrow dir="down" /></ArrowButton>
  </VTrack>
);

type ChildProps = { title: string; active?: boolean; children: React.ReactNode };

const ChildWindow = ({ title, active, children }: ChildProps) => (
  <Frame $active={active}>
    <Caption $active={active}>
      <CaptionText>
        <Festo />
        {title}
      </CaptionText>
      <ButtonRow>
        <CaptionButton $tone={active ? "live" : "idle"} aria-label="Minimize"><Min /></CaptionButton>
        <CaptionButton $tone={active ? "live" : "idle"} aria-label="Maximize"><Max /></CaptionButton>
        <CaptionButton $tone={active ? "close" : "idle"} aria-label="Close"><Cross /></CaptionButton>
      </ButtonRow>
    </Caption>
    <Viewport>{children}</Viewport>
  </Frame>
);

export default function App() {
  return (
    <Shell>
      <GlobalStyle />
      <TitleBar>
        <TitleLabel>
          <Festo />
          FluidSIM-P
        </TitleLabel>
        <MainButtons>
          <MainButton aria-label="Minimize"><Min /></MainButton>
          <MainButton aria-label="Restore"><Restore /></MainButton>
          <MainButton $close aria-label="Close"><Cross /></MainButton>
        </MainButtons>
      </TitleBar>
      <MenuBar>
        {menus.map((name) => (
          <MenuItem key={name}>{name}</MenuItem>
        ))}
      </MenuBar>
      <ToolBar>
        <Divider />
        {tools.map((tool, index) =>
          tool ? (
            <ToolButton key={index} aria-label={tool.name} disabled={tool.off}>
              <svg width="24" height="24" viewBox="0 0 24 24" fill="none" shapeRendering="crispEdges">
                {tool.art}
              </svg>
            </ToolButton>
          ) : (
            <Divider key={index} />
          )
        )}
      </ToolBar>
      <Desktop>
        <ChildWindow title="c:₩Program Files (x86)₩Festo F...">
          <Shelf>
            {parts.map(([name, art], index) => (
              <Part key={index}>
                <PartArt>{art}</PartArt>
                {name}
              </Part>
            ))}
            {lastRow.map(([name, art]) => (
              <Part key={name} aria-label={name}>
                <PartArt>{art}</PartArt>
              </Part>
            ))}
          </Shelf>
          <VScroll size={180} />
        </ChildWindow>
        <ChildWindow active title="C:₩Users₩PC-1-3₩Desktop₩정윤석 교수님₩조성진₩02_공압 시스템₩05_실린더2_편솔2.ct">
          <Sheet>
            <Circuit />
          </Sheet>
          <VScroll size={135} offset={20} />
          <HTrack>
            <ArrowButton $flow="h" aria-label="Scroll left"><Arrow dir="left" /></ArrowButton>
            <HThumb><Grip turned /></HThumb>
            <Spring />
            <ArrowButton $flow="h" aria-label="Scroll right"><Arrow dir="right" /></ArrowButton>
          </HTrack>
          <Corner>
            <svg width="9" height="9" viewBox="0 0 9 9" aria-hidden="true">
              <path d="M7 1h1v1H7zM4 4h1v1H4zM7 4h1v1H7zM1 7h1v1H1zM4 7h1v1H4zM7 7h1v1H7z" fill="#999" />
            </svg>
          </Corner>
        </ChildWindow>
      </Desktop>
      <StatusBar>
        <span>Edit Mode (Circuit changed)</span>
        <StatusBox />
      </StatusBar>
    </Shell>
  );
}
